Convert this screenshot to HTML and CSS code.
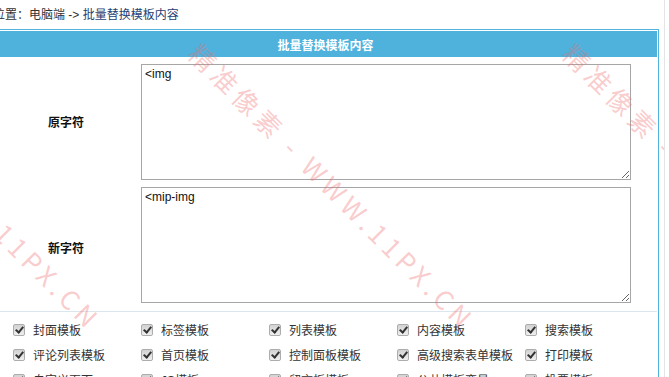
FILE: index.html
```html
<!DOCTYPE html>
<html lang="zh-CN">
<head>
  <meta charset="UTF-8" />
  <title>批量替换模板内容</title>
  <link rel="stylesheet" href="styles.css">
</head>
<body>
  <div class="page">
    <div class="crumb">位置：电脑端 -&gt; <a href="#">批量替换模板内容</a></div>

    <table class="form">
      <tr>
        <th colspan="2" class="head">批量替换模板内容</th>
      </tr>
      <tr class="row-old">
        <td class="label">原字符</td>
        <td class="field"><textarea>&lt;img</textarea></td>
      </tr>
      <tr class="row-new">
        <td class="label">新字符</td>
        <td class="field"><textarea>&lt;mip-img</textarea></td>
      </tr>
      <tr>
        <td colspan="2" class="opts">
          <div class="grid">
            <label class="opt"><span class="cb"></span>封面模板</label>
            <label class="opt"><span class="cb"></span>标签模板</label>
            <label class="opt"><span class="cb"></span>列表模板</label>
            <label class="opt"><span class="cb"></span>内容模板</label>
            <label class="opt"><span class="cb"></span>搜索模板</label>
            <label class="opt"><span class="cb"></span>评论列表模板</label>
            <label class="opt"><span class="cb"></span>首页模板</label>
            <label class="opt"><span class="cb"></span>控制面板模板</label>
            <label class="opt"><span class="cb"></span>高级搜索表单模板</label>
            <label class="opt"><span class="cb"></span>打印模板</label>
            <label class="opt"><span class="cb"></span>自定义页面</label>
            <label class="opt"><span class="cb"></span>JS模板</label>
            <label class="opt"><span class="cb"></span>留言板模板</label>
            <label class="opt"><span class="cb"></span>公共模板变量</label>
            <label class="opt"><span class="cb"></span>投票模板</label>
          </div>
        </td>
      </tr>
    </table>

    <!-- watermark over the page -->
    <span class="mark mark-left">精准像素 - WWW.11PX.CN</span>
    <span class="mark mark-mid">精准像素 - WWW.11PX.CN</span>
    <span class="mark mark-right">精准像素 - WWW.11PX.CN</span>
  </div>
</body>
</html>
```

FILE: styles.css
```css
html, body {
  margin: 0;
  background-color: #fff;
  overflow: hidden;
}
body {
  font-family: "Liberation Sans", Arial, "Noto Sans CJK SC", sans-serif;
  font-size: 12px;
  color: #333;
}
.page {
  position: relative;
  margin-left: -8px;
  width: 672px;
  height: 377px;
  border-right: 1px solid #e4e4e4;
  overflow: hidden;
}
.crumb {
  padding: 2px 0 0 1px;
  line-height: 27px;
  color: #333;
}
.crumb a {
  color: #1f3f73;
  text-decoration: none;
}
.form {
  width: 667px;
  border: 1px solid #52b3dc;
  border-spacing: 1px;
  border-collapse: separate;
  background-color: #fff;
}
.form th,
.form td {
  padding: 0;
}
.form .head {
  height: 26px;
  background-color: #4eb2dd;
  color: #fff;
  font-weight: bold;
  text-align: center;
}
.form .label {
  width: 144px;
  text-align: center;
  vertical-align: middle;
  font-weight: bold;
  color: #111;
}
.form .row-old .field {
  padding: 6px 0 4px 2px;
}
.form .row-new .field {
  padding: 2px 0 7px 2px;
}
.field textarea {
  display: block;
  box-sizing: border-box;
  width: 490px;
  height: 116px;
  margin: 0;
  padding: 2px 3px;
  border: 1px solid #a6a6a6;
  font-family: "Liberation Sans", Arial, sans-serif;
  font-size: 12px;
  line-height: 15px;
  color: #111;
}
.form .opts {
  border-top: 1px solid #dce6ee;
  padding: 5px 0 0 19px;
}
.grid {
  display: grid;
  grid-template-columns: repeat(5, 128px);
  grid-auto-rows: 25px;
}
.opt {
  display: flex;
  align-items: center;
  gap: 8px;
  color: #333;
  white-space: nowrap;
}
.cb {
  position: relative;
  flex: none;
  width: 12px;
  height: 12px;
  box-sizing: border-box;
  border: 1px solid #adadad;
  border-radius: 2px;
  background: linear-gradient(#d2d2d2, #efefef);
}
.cb::after {
  content: "";
  position: absolute;
  left: 3px;
  top: 0px;
  width: 3px;
  height: 6px;
  border-right: 2px solid #333;
  border-bottom: 2px solid #333;
  transform: rotate(40deg);
}
.mark {
  position: absolute;
  top: 35px;
  font-family: "Noto Sans CJK SC", sans-serif;
  font-size: 26px;
  line-height: 26px;
  letter-spacing: 5px;
  color: rgba(238, 110, 110, 0.36);
  white-space: nowrap;
  transform: rotate(45deg);
  transform-origin: 0 50%;
  pointer-events: none;
}
.mark-left {
  left: -172px;
}
.mark-mid {
  left: 202px;
}
.mark-right {
  left: 576px;
}
```
